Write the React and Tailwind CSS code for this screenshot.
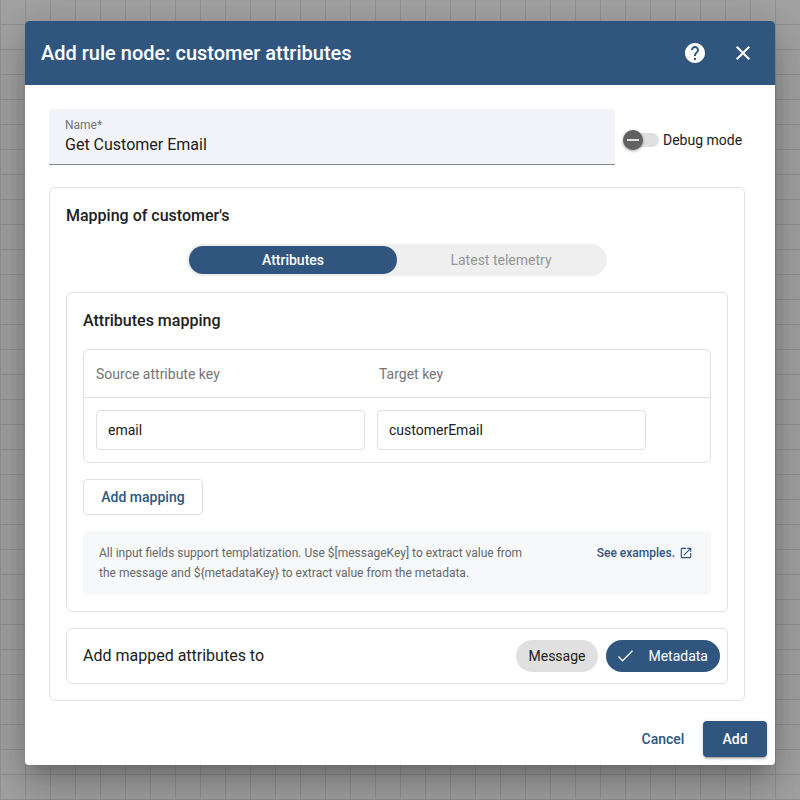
import { useState } from "react";
import { MdClose, MdHelp, MdOpenInNew } from "react-icons/md";

const SOURCES = ["Attributes", "Latest telemetry"];

function DialogHeader() {
  return (
    <header className="flex h-16 items-center bg-[#305680] pr-2 pl-4 text-white">
      <h1 className="flex-1 text-xl font-medium">Add rule node: customer attributes</h1>
      <button type="button" aria-label="Help" className="flex size-12 items-center justify-center">
        <MdHelp size={24} />
      </button>
      <button type="button" aria-label="Close" className="flex size-12 items-center justify-center">
        <MdClose size={24} />
      </button>
    </header>
  );
}

function NameField() {
  return (
    <div className="flex h-14 flex-1 flex-col rounded-t border-b border-[#87888b] bg-[#f3f4f9] px-4 pt-2">
      <label htmlFor="node-name" className="text-xs leading-4 text-[#727377]">
        Name*
      </label>
      <input
        id="node-name"
        defaultValue="Get Customer Email"
        className="h-6 w-full bg-transparent text-base text-[#212121] outline-none"
      />
    </div>
  );
}

function DebugSwitch() {
  const [on, setOn] = useState(false);
  return (
    <label className="flex w-[122px] items-center gap-1 pt-1.5 text-sm whitespace-nowrap text-[#212121]">
      <span className="relative flex h-5 w-9 items-center">
        <input
          type="checkbox"
          role="switch"
          checked={on}
          onChange={(e) => setOn(e.target.checked)}
          className="peer h-3.5 w-9 appearance-none rounded-full bg-[#e0e0e0]"
        />
        <span className="pointer-events-none absolute left-0 flex size-5 items-center justify-center rounded-full bg-[#616161] shadow-[0_1px_3px_rgba(0,0,0,0.4)] peer-checked:left-4 peer-checked:bg-[#305680]">
          <span className="h-0.5 w-3 bg-[#e0e0e0]" />
        </span>
      </span>
      Debug mode
    </label>
  );
}

function SourceToggle() {
  const [active, setActive] = useState("Attributes");
  return (
    <div className="mx-auto grid h-8 w-[420px] max-w-full grid-cols-2 rounded-full bg-[#efefef] p-0.5">
      {SOURCES.map((name) => (
        <button
          key={name}
          type="button"
          aria-pressed={active === name}
          onClick={() => setActive(name)}
          className={
            active === name
              ? "rounded-full bg-[#305680] text-sm font-medium text-white"
              : "rounded-full text-sm text-[#969696]"
          }
        >
          {name}
        </button>
      ))}
    </div>
  );
}

function MappingTable() {
  return (
    <div className="rounded-md border border-[#e0e0e0]">
      <table className="w-full table-fixed border-separate border-spacing-0 text-left text-sm">
        <thead>
          <tr className="h-12 text-[#757575]">
            <th className="border-b border-[#e0e0e0] pl-3 font-normal">Source attribute key</th>
            <th className="border-b border-[#e0e0e0] pl-3.5 font-normal">Target key</th>
            <th className="w-16 border-b border-[#e0e0e0]" />
          </tr>
        </thead>
        <tbody>
          <tr className="h-16">
            <td className="pl-3">
              <input
                aria-label="Source attribute key"
                defaultValue="email"
                className="block h-10 w-full rounded border border-[#e0e0e0] px-[11px] text-sm text-[#212121] outline-none"
              />
            </td>
            <td className="pl-3">
              <input
                aria-label="Target key"
                defaultValue="customerEmail"
                className="block h-10 w-full rounded border border-[#e0e0e0] px-[11px] text-sm text-[#212121] outline-none"
              />
            </td>
            <td />
          </tr>
        </tbody>
      </table>
    </div>
  );
}

function TemplateHint() {
  return (
    <div className="flex items-start justify-between rounded-md bg-[#f7f8fa] px-4 py-3">
      <p className="text-xs leading-5 text-[#666769]">
        All input fields support templatization. Use $[messageKey] to extract value from
        <br />
        the message and $&#123;metadataKey&#125; to extract value from the metadata.
      </p>
      <a href="#examples" className="mr-0.5 flex items-center gap-1 text-xs leading-5 font-medium text-[#305680]">
        See examples.
        <MdOpenInNew size={14} />
      </a>
    </div>
  );
}

function TargetChips() {
  const [target, setTarget] = useState("Metadata");
  return (
    <div className="flex gap-2">
      {["Message", "Metadata"].map((name) => (
        <button
          key={name}
          type="button"
          aria-pressed={target === name}
          onClick={() => setTarget(name)}
          className={
            target === name
              ? "flex h-8 w-[114px] items-center justify-between rounded-full bg-[#305680] px-3 text-sm text-white"
              : "flex h-8 w-[82px] items-center justify-center rounded-full bg-[#e0e0e0] text-sm text-[#212121]"
          }
        >
          {target === name && (
            <svg width="15" height="12" viewBox="0 0 15 12" fill="none" stroke="currentColor" strokeWidth="1.3">
              <path d="M0.5 6.5 L4.5 10.7 L14.5 0.8" />
            </svg>
          )}
          {name}
        </button>
      ))}
    </div>
  );
}

export default function App() {
  return (
    <div className="min-h-screen bg-[#a2a2a2] bg-[linear-gradient(to_right,#929292_1px,transparent_1px),linear-gradient(to_bottom,#929292_1px,transparent_1px)] bg-[size:25px_25px] bg-[position:0_24px] px-[25px] pt-[21px] pb-[35px] font-['Roboto',sans-serif]">
      <form
        role="dialog"
        aria-label="Add rule node"
        onSubmit={(e) => e.preventDefault()}
        className="overflow-hidden rounded bg-white shadow-[0_11px_15px_-7px_rgba(0,0,0,0.2),0_24px_38px_3px_rgba(0,0,0,0.14),0_9px_46px_8px_rgba(0,0,0,0.12)]"
      >
        <DialogHeader />
        <div className="flex flex-col gap-[22px] pt-6 pr-[30px] pb-5 pl-6">
          <div className="flex items-center gap-2">
            <NameField />
            <DebugSwitch />
          </div>
          <section className="flex flex-col gap-4 rounded-md border border-[#e0e0e0] p-4">
            <h2 className="text-base font-medium text-[#212121]">Mapping of customer's</h2>
            <SourceToggle />
            <section className="flex flex-col gap-4 rounded-md border border-[#e0e0e0] p-4">
              <h3 className="text-base font-medium text-[#212121]">Attributes mapping</h3>
              <MappingTable />
              <button
                type="button"
                className="h-9 w-[120px] rounded border border-[#e0e0e0] text-sm font-medium text-[#305680]"
              >
                Add mapping
              </button>
              <TemplateHint />
            </section>
            <div className="flex h-14 items-center justify-between rounded-md border border-[#e0e0e0] pr-[7px] pl-4">
              <span className="text-base text-[#212121]">Add mapped attributes to</span>
              <TargetChips />
            </div>
          </section>
        </div>
        <footer className="flex justify-end gap-2 px-2 pb-2">
          <button type="button" className="h-9 min-w-16 text-sm font-medium text-[#305680]">
            Cancel
          </button>
          <button
            type="submit"
            className="h-9 min-w-16 rounded bg-[#305680] text-sm font-medium text-white shadow-[0_3px_1px_-2px_rgba(0,0,0,0.2),0_2px_2px_rgba(0,0,0,0.14),0_1px_5px_rgba(0,0,0,0.12)]"
          >
            Add
          </button>
        </footer>
      </form>
    </div>
  );
}
